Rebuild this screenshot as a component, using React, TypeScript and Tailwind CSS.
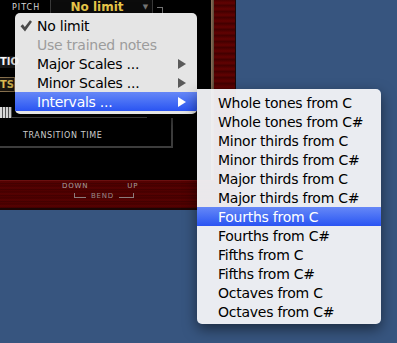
import React from 'react';

const FONT = { fontFamily: '"DejaVu Sans", Verdana, sans-serif' };
const PIX = { fontFamily: '"DejaVu Sans", "Liberation Sans", sans-serif' };

interface MenuItem {
  label: string;
  checked?: boolean;
  disabled?: boolean;
  submenu?: boolean;
  active?: boolean;
}

const mainItems: MenuItem[] = [
  { label: 'No limit', checked: true },
  { label: 'Use trained notes', disabled: true },
  { label: 'Major Scales ...', submenu: true },
  { label: 'Minor Scales ...', submenu: true },
  { label: 'Intervals ...', submenu: true, active: true },
];

const intervalItems: MenuItem[] = [
  { label: 'Whole tones from C' },
  { label: 'Whole tones from C#' },
  { label: 'Minor thirds from C' },
  { label: 'Minor thirds from C#' },
  { label: 'Major thirds from C' },
  { label: 'Major thirds from C#' },
  { label: 'Fourths from C', active: true },
  { label: 'Fourths from C#' },
  { label: 'Fifths from C' },
  { label: 'Fifths from C#' },
  { label: 'Octaves from C' },
  { label: 'Octaves from C#' },
];

const Check = () => (
  <svg width="12" height="12" viewBox="0 0 12 12" className="shrink-0">
    <path d="M0.5 6.2 L2.8 4.3 L4.8 7 L10 0.3 L12 1.8 L5 11.6 Z" fill="#4a4a4a" />
  </svg>
);

const Arrow = ({ white }: { white?: boolean }) => (
  <svg width="8" height="10" viewBox="0 0 8 10">
    <path d="M0 0 L8 5 L0 10 Z" fill={white ? '#ffffff' : '#5a5a5a'} />
  </svg>
);

const Row = ({ item, pad }: { item: MenuItem; pad: string }) => (
  <div
    className={`flex h-[19px] items-center ${pad} pr-[11px] text-[14px] leading-none tracking-[-0.25px] ${
      item.active
        ? 'bg-gradient-to-b from-[#6687f7] to-[#2a53f2] text-white'
        : item.disabled
        ? 'text-[#9c9c9c]'
        : 'text-black'
    }`}
  >
    {item.checked && (
      <span className="-ml-[17px] mr-[5px] flex w-[12px]">
        <Check />
      </span>
    )}
    <span className="flex-1 whitespace-nowrap">{item.label}</span>
    {item.submenu && <Arrow white={item.active} />}
  </div>
);

const App = () => {
  return (
    <div className="relative h-[343px] w-[397px] overflow-hidden bg-[#37557f]" style={FONT}>
      {/* instrument panel behind the menus */}
      <div className="flex w-[236px] flex-col">
        <div className="flex h-[180px]">
          <div className="flex w-[211px] flex-col bg-black" style={PIX}>
            <div className="flex h-[15px] items-start">
              <span className="ml-[12px] mt-[4px] text-[8px] leading-none tracking-[1px] text-[#d8d8d8]">PITCH</span>
              <div className="ml-[10px] flex h-[15px] w-[103px] items-center border border-t-0 border-[#3a3a3a] bg-[#0c0c0c]">
                <span className="flex-1 text-center text-[12px] font-bold leading-none text-[#e9c84a]">No limit</span>
                <span className="mr-[4px] text-[7px] text-[#777]">▼</span>
              </div>
              <div className="ml-[4px] mt-[7px] h-[8px] w-[6px] border-r border-t border-[#777]" />
            </div>
            <div className="mt-[41px] flex h-[12px] w-[16px] items-center bg-[#1a1a1a]">
              <span className="text-[10px] font-bold leading-none text-white">TIO</span>
            </div>
            <div className="mt-[9px] flex h-[15px] w-[15px] items-center border border-l-0 border-[#8a7350] bg-[#1c1710]">
              <span className="text-[10px] font-bold leading-none text-[#e0bf52]">TS</span>
            </div>
            <div className="mt-[14px] flex h-[12px] items-end">
              <div className="h-[11px] w-[12px] bg-[repeating-linear-gradient(90deg,#ddd_0px,#ddd_2px,#555_2px,#555_3px)]" />
              <div className="h-px w-[135px] bg-[#4a4a4a]" />
            </div>
            <div className="flex h-[30px] w-[173px] items-end border-b-2 border-r-2 border-[#3c3c3c] pb-[6px]">
              <span className="ml-[23px] text-[8px] leading-none tracking-[0.6px] text-[#cfcfcf]">TRANSITION TIME</span>
            </div>
          </div>
          <div className="w-[3px] bg-gradient-to-r from-[#8c7660] to-[#5a4432]" />
          <div className="w-[21px] bg-[repeating-linear-gradient(0deg,#3e0000_0px,#620202_3px,#470000_6px)]" />
          <div className="w-[1px] bg-[#1a0808]" />
        </div>
        <div className="flex h-[30px] flex-col border-t border-[#6a1010] border-b-2 border-b-[#1a0505] bg-[repeating-linear-gradient(0deg,#3c0000_0px,#5a0202_2px,#440000_4px,#520101_6px)]" style={PIX}>
          <div className="mt-[2px] flex">
            <span className="ml-[62px] text-[7px] leading-none tracking-[0.8px] text-[#a9a0a0]">DOWN</span>
            <span className="ml-[39px] text-[7px] leading-none tracking-[0.8px] text-[#a9a0a0]">UP</span>
          </div>
          <div className="ml-[74px] mt-[3px] flex w-[60px] items-center">
            <div className="h-[5px] w-[12px] self-start border-b border-l border-[#8c7c7c]" />
            <span className="mx-[5px] text-[7px] leading-none tracking-[0.8px] text-[#9a8a8a]">BEND</span>
            <div className="h-[5px] flex-1 self-start border-b border-r border-[#8c7c7c]" />
          </div>
        </div>
      </div>

      {/* main popup menu */}
      <div className="absolute left-[15px] top-[13px] w-[182px] overflow-hidden rounded-[5px] bg-[#f1f1f1]/95 py-[3px] shadow-[0_5px_14px_rgba(0,0,0,0.5)]">
        {mainItems.map((it) => (
          <Row key={it.label} item={it} pad="pl-[22px]" />
        ))}
      </div>

      {/* intervals submenu */}
      <div className="absolute left-[197px] top-[89px] w-[184px] overflow-hidden rounded-[5px] rounded-tl-none bg-[#f3f4f8]/95 pb-[3px] pt-[4px] shadow-[0_5px_14px_rgba(0,0,0,0.5)]">
        {intervalItems.map((it) => (
          <Row key={it.label} item={it} pad="pl-[21px]" />
        ))}
      </div>
    </div>
  );
};

export default App;
